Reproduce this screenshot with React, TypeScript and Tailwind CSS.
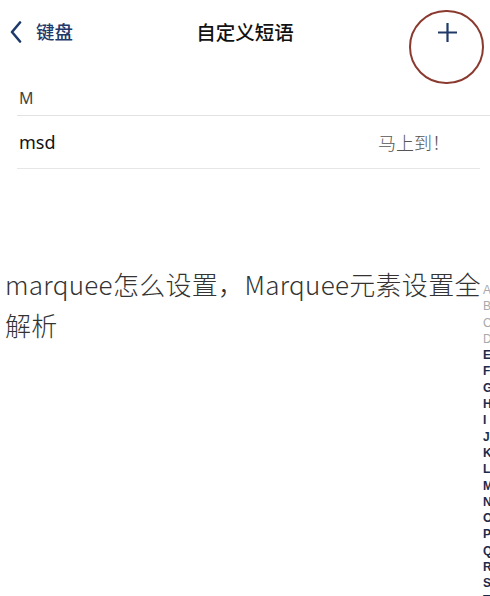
import React from 'react';

const letters = 'ABCDEFGHIJKLMNOPQRST'.split('');

export default function App() {
  return (
    <div
      className="relative w-[490px] h-[596px] overflow-hidden bg-white"
      style={{ fontFamily: '"Noto Sans", "Noto Sans CJK SC", sans-serif' }}
    >
      {/* nav bar */}
      <div className="relative h-[64px] flex items-center px-[10px]">
        <div className="flex items-center gap-[14px] text-[#1f3a6a]">
          <svg width="12" height="22" viewBox="0 0 12 22" fill="none">
            <path d="M10 1.5 L2 11 L10 20.5" stroke="#1f3a6a" strokeWidth="2.6" strokeLinecap="round" strokeLinejoin="round" />
          </svg>
          <span className="text-[18.5px] font-['Noto_Sans_CJK_SC'] font-medium">键盘</span>
        </div>
        <div className="absolute left-0 right-0 text-center text-[19.5px] font-medium text-[#111] pointer-events-none font-['Noto_Sans_CJK_SC']">
          自定义短语
        </div>
        <div className="ml-auto mr-[22px]">
          <svg width="21" height="21" viewBox="0 0 21 21" fill="none">
            <path d="M10.5 1 V20 M1 10.5 H20" stroke="#1f3a6a" strokeWidth="2.2" />
          </svg>
        </div>
      </div>
      <div className="absolute left-[409px] top-[10px] w-[75px] h-[74px] rounded-full border-2 border-[#8a3a2e]" />

      {/* section header */}
      <div className="h-[51px] flex items-end pb-[5px] pl-[19px] text-[16px] text-[#444]">M</div>
      <div className="ml-[17px] h-px bg-[#e2e2e2]" />

      {/* row */}
      <div className="h-[52px] flex items-center justify-between pl-[19px] pr-[40px]">
        <span className="text-[18px] text-[#111]">msd</span>
        <span className="text-[18px] text-[#555] font-['Noto_Sans_CJK_SC'] font-light">马上到！</span>
      </div>
      <div className="ml-[17px] mr-[10px] h-px bg-[#e6e6e6]" />

      {/* overlay heading */}
      <h1 className="mt-[94px] pl-[5px] w-[488px] text-[26px] leading-[41px] tracking-[0.3px] font-light text-[#333] font-['Noto_Sans_CJK_SC']">
        marquee怎么设置，Marquee元素设置全解析
      </h1>

      {/* index bar */}
      <div className="absolute left-[483px] top-[282px] flex flex-col font-['Liberation_Sans'] text-[12px] leading-[16.3px]">
        {letters.map((l, i) => (
          <span key={l} className={i < 4 ? 'text-[#a9a9a9]' : 'font-bold text-[#1c2b4a]'}>
            {l}
          </span>
        ))}
      </div>
    </div>
  );
}
